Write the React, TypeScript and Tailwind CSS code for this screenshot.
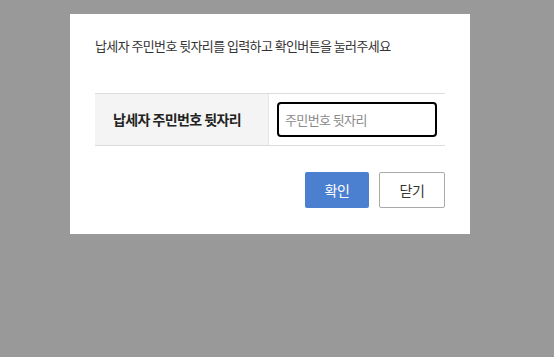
import React, { useState } from 'react';

const font = { fontFamily: '"Noto Sans CJK KR", "Noto Sans", sans-serif' };

export default function App() {
  const [value, setValue] = useState('');

  return (
    <div className="w-[554px] h-[357px] bg-[#999999] pl-[70px] pt-[14px]" style={font}>
      <div className="w-[400px] h-[220px] bg-white px-[25px] pt-[22px]">
        <p className="text-[13px] leading-[20px] tracking-[-0.6px] text-[#333]">
          납세자 주민번호 뒷자리를 입력하고 확인버튼을 눌러주세요
        </p>

        <div className="mt-[37px] flex border-y border-[#dcdcdc]">
          <div className="w-[174px] h-[51px] bg-[#f4f4f4] border-r border-[#e6e6e6] flex items-center justify-center pr-[9px]">
            <span className="text-[14px] font-bold tracking-[-0.6px] text-[#222]">납세자 주민번호 뒷자리</span>
          </div>
          <div className="flex-1 pl-[8px] pt-[8px]">
            <input
              autoFocus
              value={value}
              onChange={e => setValue(e.target.value)}
              placeholder="주민번호 뒷자리"
              className="w-[160px] h-[35px] border-2 border-black rounded-[4px] px-[6px] text-[13px] tracking-[-0.6px] text-[#222] placeholder:text-[#8a8a8a] outline-none"
            />
          </div>
        </div>

        <div className="mt-[26px] flex justify-end gap-[10px]">
          <button className="w-[64px] h-[36px] bg-[#4b80d1] text-white text-[14px] tracking-[-0.5px] rounded-[2px]">
            확인
          </button>
          <button className="w-[66px] h-[36px] bg-white border border-[#aaaaaa] text-[#333] text-[14px] tracking-[-0.5px] rounded-[2px]">
            닫기
          </button>
        </div>
      </div>
    </div>
  );
}
